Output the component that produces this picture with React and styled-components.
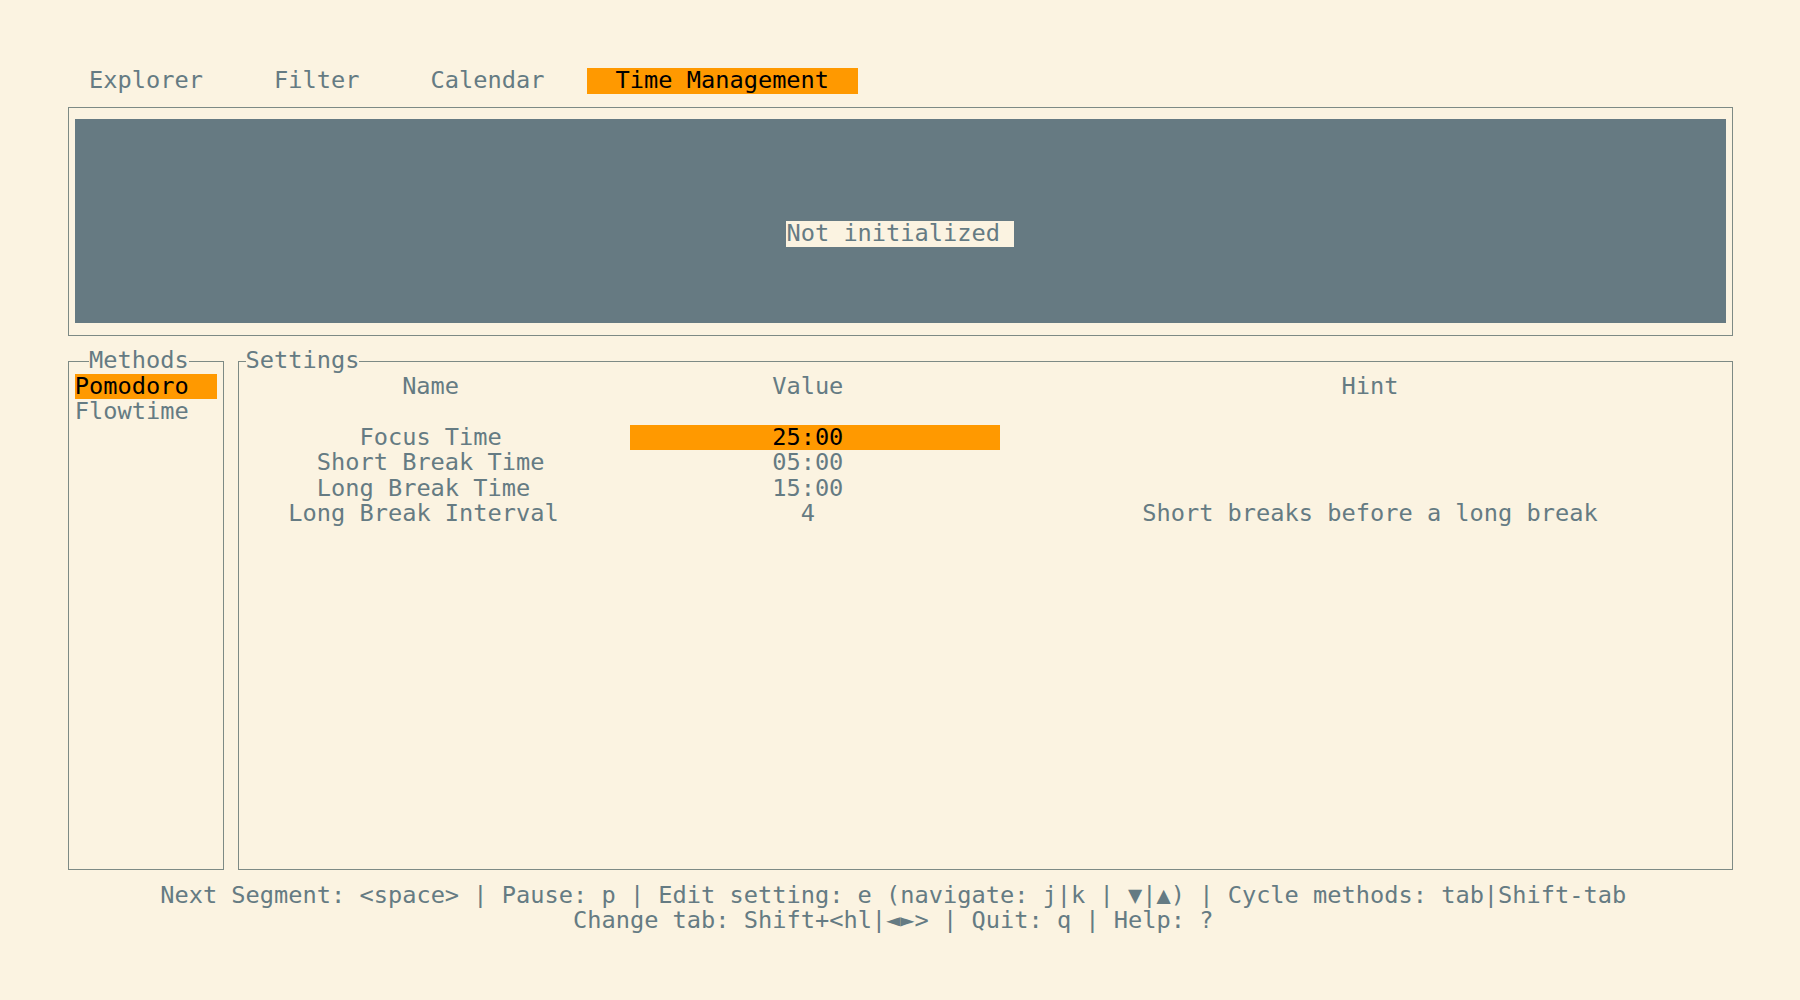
import React from 'react'
import styled, { createGlobalStyle } from 'styled-components'

// terminal cell grid: 1ch wide, ROW tall
const ROW = 25.45
const CREAM = '#fbf3e1'
const INK = '#657b83'
const SLATE = '#667a82'
const ORANGE = '#ff9900'
const LINE = '#7d8a85'

const GlobalStyle = createGlobalStyle`
  html, body {
    margin: 0;
    background: ${CREAM};
  }
  body {
    font-family: 'DejaVu Sans Mono', 'Liberation Mono', monospace;
    font-size: 23.65px;
    line-height: ${ROW}px;
    color: ${INK};
  }
`

const Screen = styled.main`
  box-sizing: border-box;
  width: 1800px;
  height: 1000px;
  padding: 68.4px 0 0 60.6px;
  display: flex;
  flex-direction: column;
`

const TabBar = styled.nav`
  display: flex;
  gap: 1ch;
  height: ${ROW}px;
`

const Tab = styled.span`
  padding: 0 2ch;
  white-space: pre;
  background: ${p => (p.$active ? ORANGE : 'transparent')};
  color: ${p => (p.$active ? '#000' : INK)};
`

const Frame = styled.section`
  position: relative;
  box-sizing: border-box;
  width: ${p => (p.$cols ? `${p.$cols}ch` : 'auto')};
  flex: ${p => (p.$cols ? 'none' : '1 1 auto')};
  height: ${p => p.$rows * ROW}px;
  padding: ${ROW / 2}px 0.5ch;
`

const FrameBody = styled.div`
  box-sizing: border-box;
  height: 100%;
  border: 1px solid ${LINE};
  padding: ${ROW / 2 - 1}px calc(0.5ch - 1px);
`

const FrameTitle = styled.span`
  position: absolute;
  top: 0;
  left: ${p => p.$col}ch;
  height: ${ROW}px;
  background: ${CREAM};
  white-space: pre;
`

const TimerPanel = styled.div`
  box-sizing: border-box;
  height: 100%;
  background: ${SLATE};
  padding: ${4 * ROW}px 0 0 ${p => p.$pad}ch;
  display: flex;
  align-items: flex-start;
`

const StatusLabel = styled.span`
  background: ${CREAM};
  color: ${INK};
  padding-right: 1ch;
  white-space: pre;
`

const Columns = styled.div`
  display: flex;
  width: 118ch;
  flex: none;
`

const MethodItem = styled.div`
  height: ${ROW}px;
  white-space: pre;
  background: ${p => (p.$active ? ORANGE : 'transparent')};
  color: ${p => (p.$active ? '#000' : INK)};
`

const TableRow = styled.div`
  display: grid;
  grid-template-columns: 26ch 26ch 50ch;
  column-gap: 1ch;
  height: ${ROW}px;
  margin-bottom: ${p => (p.$header ? ROW : 0)}px;
`

const Cell = styled.div`
  white-space: pre;
  padding-left: ${p => p.$pad}ch;
  background: ${p => (p.$active ? ORANGE : 'transparent')};
  color: ${p => (p.$active ? '#000' : INK)};
`

const Footer = styled.footer`
  width: 117ch;
  text-align: center;
  white-space: pre;
`

const tabs = ['Explorer', 'Filter', 'Calendar', 'Time Management']
const methods = ['Pomodoro', 'Flowtime']
const settings = [
  { name: 'Focus Time', value: '25:00', hint: '' },
  { name: 'Short Break Time', value: '05:00', hint: '' },
  { name: 'Long Break Time', value: '15:00', hint: '' },
  { name: 'Long Break Interval', value: '4', hint: 'Short breaks before a long break' },
]

// left offset that centres text in a cell-wide column, rounded down like the terminal does
const pad = (width, text) => Math.max(0, Math.floor((width - [...text].length) / 2))

function App() {
  const [activeTab] = React.useState(3)
  const [method] = React.useState(0)
  const [selected] = React.useState(0)

  return (
    <>
      <GlobalStyle />
      <Screen>
        <TabBar>
          {tabs.map((t, i) => (
            <Tab key={t} $active={i === activeTab}>{t}</Tab>
          ))}
        </TabBar>

        <Frame $cols={118} $rows={10}>
          <FrameBody>
            <TimerPanel $pad={pad(116, 'Not initialized')}>
              <StatusLabel>Not initialized</StatusLabel>
            </TimerPanel>
          </FrameBody>
        </Frame>

        <Columns>
          <Frame $cols={12} $rows={21}>
            <FrameBody>
              {methods.map((m, i) => (
                <MethodItem key={m} $active={i === method}>{m}</MethodItem>
              ))}
            </FrameBody>
            <FrameTitle $col={1 + pad(10, 'Methods')}>Methods</FrameTitle>
          </Frame>

          <Frame $rows={21}>
            <FrameBody>
              <TableRow $header>
                <Cell $pad={pad(26, 'Name')}>Name</Cell>
                <Cell $pad={pad(26, 'Value')}>Value</Cell>
                <Cell $pad={pad(50, 'Hint')}>Hint</Cell>
              </TableRow>
              {settings.map((s, i) => (
                <TableRow key={s.name}>
                  <Cell $pad={pad(26, s.name)}>{s.name}</Cell>
                  <Cell $pad={pad(26, s.value)} $active={i === selected}>{s.value}</Cell>
                  <Cell $pad={pad(50, s.hint)}>{s.hint}</Cell>
                </TableRow>
              ))}
            </FrameBody>
            <FrameTitle $col={1}>Settings</FrameTitle>
          </Frame>
        </Columns>

        <Footer>
          {'Next Segment: <space> | Pause: p | Edit setting: e (navigate: j|k | ▼|▲) | Cycle methods: tab|Shift-tab'}
          {'\n'}
          {'Change tab: Shift+<hl|◄►> | Quit: q | Help: ?'}
        </Footer>
      </Screen>
    </>
  )
}

export default App
